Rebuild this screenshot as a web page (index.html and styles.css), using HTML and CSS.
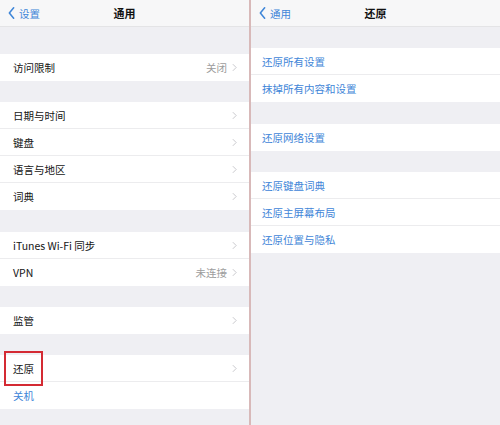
FILE: index.html
```html
<!DOCTYPE html>
<html lang="zh-CN">
<head>
<meta charset="utf-8">
<link rel="stylesheet" href="styles.css">
</head>
<body>
<div class="screen">
  <section class="panel left">
    <header class="nav">
      <div class="back"><svg class="back-ico" viewBox="0 0 8 14" width="7" height="12"><polyline points="6.5,1 1.5,7 6.5,13" fill="none" stroke="currentColor" stroke-width="1.8" stroke-linecap="round" stroke-linejoin="round"/></svg><span>设置</span></div>
      <div class="title">通用</div>
    </header>
    <div class="group first">
      <div class="row"><span class="label">访问限制</span><span class="value">关闭</span><svg class="chev" viewBox="0 0 6 10" width="5" height="9"><polyline points="1,1 5,5 1,9" fill="none" stroke="currentColor" stroke-width="1.1"/></svg></div>
    </div>
    <div class="group">
      <div class="row"><span class="label">日期与时间</span><svg class="chev" viewBox="0 0 6 10" width="5" height="9"><polyline points="1,1 5,5 1,9" fill="none" stroke="currentColor" stroke-width="1.1"/></svg></div>
      <div class="row"><span class="label">键盘</span><svg class="chev" viewBox="0 0 6 10" width="5" height="9"><polyline points="1,1 5,5 1,9" fill="none" stroke="currentColor" stroke-width="1.1"/></svg></div>
      <div class="row"><span class="label">语言与地区</span><svg class="chev" viewBox="0 0 6 10" width="5" height="9"><polyline points="1,1 5,5 1,9" fill="none" stroke="currentColor" stroke-width="1.1"/></svg></div>
      <div class="row"><span class="label">词典</span><svg class="chev" viewBox="0 0 6 10" width="5" height="9"><polyline points="1,1 5,5 1,9" fill="none" stroke="currentColor" stroke-width="1.1"/></svg></div>
    </div>
    <div class="group wide">
      <div class="row"><span class="label">iTunes Wi-Fi 同步</span><svg class="chev" viewBox="0 0 6 10" width="5" height="9"><polyline points="1,1 5,5 1,9" fill="none" stroke="currentColor" stroke-width="1.1"/></svg></div>
      <div class="row"><span class="label">VPN</span><span class="value">未连接</span><svg class="chev" viewBox="0 0 6 10" width="5" height="9"><polyline points="1,1 5,5 1,9" fill="none" stroke="currentColor" stroke-width="1.1"/></svg></div>
    </div>
    <div class="group">
      <div class="row"><span class="label">监管</span><svg class="chev" viewBox="0 0 6 10" width="5" height="9"><polyline points="1,1 5,5 1,9" fill="none" stroke="currentColor" stroke-width="1.1"/></svg></div>
    </div>
    <div class="group">
      <div class="row marked"><span class="label">还原</span><svg class="chev" viewBox="0 0 6 10" width="5" height="9"><polyline points="1,1 5,5 1,9" fill="none" stroke="currentColor" stroke-width="1.1"/></svg><span class="highlight"></span></div>
      <div class="row"><span class="label link">关机</span></div>
    </div>
  </section>
  <div class="divider"></div>
  <section class="panel right">
    <header class="nav">
      <div class="back"><svg class="back-ico" viewBox="0 0 8 14" width="7" height="12"><polyline points="6.5,1 1.5,7 6.5,13" fill="none" stroke="currentColor" stroke-width="1.8" stroke-linecap="round" stroke-linejoin="round"/></svg><span>通用</span></div>
      <div class="title">还原</div>
    </header>
    <div class="group">
      <div class="row"><span class="label link">还原所有设置</span></div>
      <div class="row"><span class="label link">抹掉所有内容和设置</span></div>
    </div>
    <div class="group wide">
      <div class="row"><span class="label link">还原网络设置</span></div>
    </div>
    <div class="group">
      <div class="row"><span class="label link">还原键盘词典</span></div>
      <div class="row"><span class="label link">还原主屏幕布局</span></div>
      <div class="row"><span class="label link">还原位置与隐私</span></div>
    </div>
  </section>
</div>
</body>
</html>
```
FILE: styles.css
```css
html, body {
  margin: 0;
  padding: 0;
}
body {
  width: 500px;
  height: 425px;
  overflow: hidden;
  background: #efeff3;
  font-family: "Noto Sans CJK SC", "Noto Sans", sans-serif;
  -webkit-font-smoothing: antialiased;
}
.screen {
  display: flex;
  height: 425px;
}
.panel {
  background: #efeff3;
  display: flex;
  flex-direction: column;
}
.left {
  width: 249px;
}
.right {
  flex: 1;
}
.divider {
  width: 2px;
  background: #d8b9b9;
}
.nav {
  height: 26px;
  background: #f7f7f8;
  border-bottom: 1px solid #e4e4e6;
  display: grid;
  grid-template-columns: 1fr auto 1fr;
  align-items: center;
}
.back {
  display: flex;
  align-items: center;
  gap: 4px;
  color: #3f86d8;
  font-size: 10.5px;
  padding-left: 8px;
}
.right .back {
  padding-left: 8px;
}
.back-ico {
  display: block;
}
.title {
  font-size: 11px;
  font-weight: 700;
  color: #111;
}
.group {
  margin-top: 21px;
  background: #fff;
}
.group.first {
  margin-top: 27px;
}
.group.wide {
  margin-top: 22px;
}
.row {
  position: relative;
  height: 27px;
  display: flex;
  align-items: center;
  padding-left: 13px;
  padding-right: 12px;
  box-sizing: border-box;
  border-bottom: 1px solid #ececee;
}
.right .row {
  padding-left: 11px;
}
.row:last-child {
  border-bottom: none;
}
.label {
  flex: 1;
  font-size: 10.5px;
  color: #151515;
}
.label.link {
  color: #3f86d8;
}
.value {
  font-size: 10.5px;
  color: #9c9c9c;
  margin-right: 5px;
}
.chev {
  color: #c4c4c8;
  display: block;
}
.highlight {
  position: absolute;
  left: 4px;
  top: -4px;
  width: 35px;
  height: 31px;
  border: 2px solid #d42a33;
}
```
